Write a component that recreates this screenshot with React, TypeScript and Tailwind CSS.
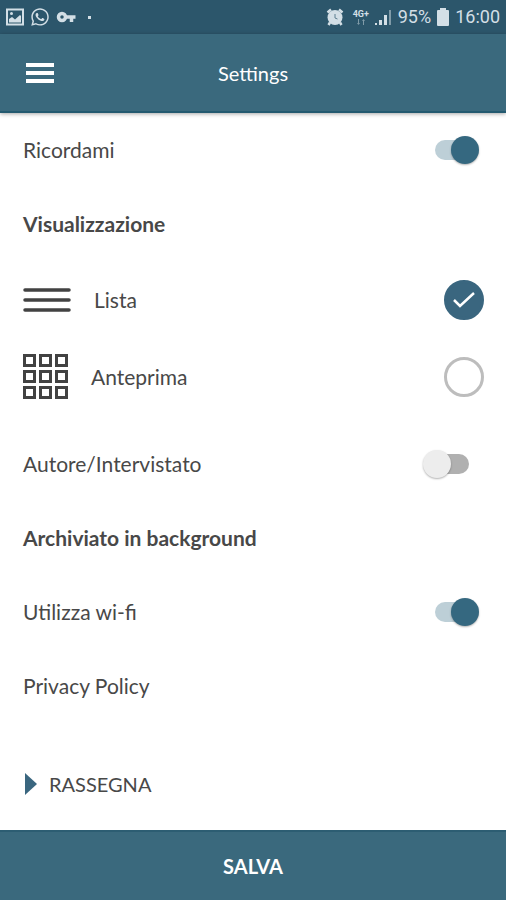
import { useState } from 'react'
import { FaWhatsapp } from 'react-icons/fa'

type View = 'lista' | 'anteprima'

function StatusBar() {
  return (
    <div className="flex h-[34px] items-center justify-between bg-[#2c566b] px-1.5 font-['Roboto',sans-serif] text-[#d3dfe6]">
      <div className="flex items-center gap-1.5">
        <svg viewBox="0 0 18 18" className="h-[18px] w-[18px]" fill="none">
          <path d="M1 1.500h16v15H1z" stroke="currentColor" strokeWidth="2" />
          <path d="M3 14.500V11l3-2 3 2.500 5-4.500 1 1v6.500z" fill="currentColor" />
          <circle cx="5.500" cy="5.500" r="1.500" fill="currentColor" />
        </svg>
        <FaWhatsapp className="h-5 w-5" />
        <svg viewBox="0 0 20 14" className="h-3.5 w-5" fill="none" stroke="currentColor">
          <circle cx="6" cy="7" r="3.500" strokeWidth="3.500" />
          <path d="M10 7h9.500" strokeWidth="3.500" />
          <path d="M15.500 7v5" strokeWidth="3.500" />
        </svg>
        <span className="ml-1.5 h-[3px] w-[3px] bg-current" />
      </div>
      <div className="flex items-center gap-1">
        <svg viewBox="0 0 18 18" className="mr-1 h-[18px] w-[18px]" fill="none" stroke="currentColor">
          <circle cx="9" cy="9.500" r="7.500" fill="currentColor" stroke="none" />
          <path d="M1.500 4.500 5 1.500M16.500 4.500 13 1.500M4 14.500 2.500 17M14 14.500l1.500 2.500" strokeWidth="2.500" />
          <path d="M9 6v4l2.500 1" stroke="#5d7f90" />
        </svg>
        <div className="flex w-[18px] flex-col items-center text-[9px] leading-[9px] font-bold">
          <span>4G+</span>
          <svg viewBox="0 0 10 6" className="h-1.5 w-2.5 opacity-50" fill="currentColor">
            <path d="M2 0h1v4h1L2.500 6 1 4h1zM7 6h1V2h1L7.500 0 6 2h1z" />
          </svg>
        </div>
        <svg viewBox="0 0 18 18" className="h-[18px] w-[18px]" fill="currentColor">
          <path d="M1 15h2v2H1zM5 12h3v5H5zM10 7h3v10h-3z" />
          <path d="M15 2h2v15h-2z" opacity=".5" />
        </svg>
        <span className="ml-0.5 text-lg leading-6">95%</span>
        <svg viewBox="0 0 12 18" className="mx-0.5 h-[18px] w-3" fill="currentColor">
          <path d="M3 0h6v2h2q1 0 1 1v14q0 1-1 1H1q-1 0-1-1V3q0-1 1-1h2z" />
        </svg>
        <span className="text-lg leading-6">16:00</span>
      </div>
    </div>
  )
}

function SwitchRow({ label, defaultChecked = false }: { label: string; defaultChecked?: boolean }) {
  return (
    <label className="flex h-[74px] items-center justify-between pr-[37px] pl-[23px]">
      {label}
      <input
        type="checkbox"
        role="switch"
        defaultChecked={defaultChecked}
        className="relative h-5 w-[34px] appearance-none rounded-full bg-[#b0b0b0] before:absolute before:-top-1 before:-left-3 before:h-7 before:w-7 before:rounded-full before:bg-[#ededed] before:shadow-[0_1px_2px_rgba(0,0,0,0.3)] checked:bg-[#bdcfd7] checked:before:left-4 checked:before:bg-[#356880]"
      />
    </label>
  )
}

function ListIcon() {
  return (
    <svg viewBox="0 0 48 26" className="h-[26px] w-12" stroke="#424242" strokeWidth="3.500" strokeLinecap="round">
      <path d="M2 3h44M2 13h44M2 23h44" />
    </svg>
  )
}

function GridIcon() {
  return (
    <svg viewBox="0 0 45 45" className="h-[45px] w-[45px]" fill="none" stroke="#424242" strokeWidth="3">
      {[1.5, 17.5, 33.5].map((y) =>
        [1.5, 17.5, 33.5].map((x) => <rect key={`${x}-${y}`} x={x} y={y} width="10" height="10" />)
      )}
    </svg>
  )
}

export default function App() {
  const [view, setView] = useState<View>('lista')

  const views = [
    { id: 'lista' as View, label: 'Lista', icon: <ListIcon /> },
    { id: 'anteprima' as View, label: 'Anteprima', icon: <GridIcon /> },
  ]

  return (
    <div className="flex min-h-screen flex-col bg-white font-['Lato',sans-serif] text-[21px] leading-7 text-[#484848]">
      <StatusBar />
      <header className="grid h-[79px] grid-cols-[1fr_auto_1fr] items-center border-b-2 border-[#245a70] bg-[#3a697d] px-[26px] text-white shadow-[0_1px_4px_rgba(0,0,0,0.35)]">
        <button type="button" aria-label="Menu" className="flex w-7 flex-col gap-1">
          <span className="h-1 bg-white" />
          <span className="h-1 bg-white" />
          <span className="h-1 bg-white" />
        </button>
        <h1 className="text-xl">Settings</h1>
      </header>

      <main className="flex-1">
        <SwitchRow label="Ricordami" defaultChecked />

        <h2 id="view-title" className="flex h-[74px] items-center px-[23px] font-bold">
          Visualizzazione
        </h2>
        <div role="radiogroup" aria-labelledby="view-title" className="mb-3">
          {views.map((v) => (
            <label key={v.id} className="flex h-[77px] items-center gap-[23px] pr-[22px] pl-[23px]">
              {v.icon}
              <span className="flex-1">{v.label}</span>
              <span className="grid h-10 w-10 place-items-center">
                <input
                  type="radio"
                  name="view"
                  value={v.id}
                  checked={view === v.id}
                  onChange={() => setView(v.id)}
                  className="col-start-1 row-start-1 h-10 w-10 appearance-none rounded-full border-[3px] border-[#bdbdbd] checked:border-[#3a667f] checked:bg-[#3a667f]"
                />
                {view === v.id && (
                  <svg
                    viewBox="0 0 24 18"
                    className="pointer-events-none col-start-1 row-start-1 h-[18px] w-6"
                    fill="none"
                    stroke="white"
                    strokeWidth="2.500"
                  >
                    <path d="M2 9l6 6L22 2" />
                  </svg>
                )}
              </span>
            </label>
          ))}
        </div>

        <SwitchRow label="Autore/Intervistato" />

        <h2 className="flex h-[74px] items-center px-[23px] font-bold">Archiviato in background</h2>
        <SwitchRow label="Utilizza wi-fi" defaultChecked />
        <a href="#privacy" className="flex h-[74px] items-center px-[23px]">
          Privacy Policy
        </a>

        <button type="button" className="mt-6 flex h-[74px] w-full items-center gap-3 px-[25px] text-xl">
          <svg viewBox="0 0 12 22" className="h-[22px] w-3" fill="#3a667f">
            <path d="M0 0l12 11L0 22z" />
          </svg>
          RASSEGNA
        </button>
      </main>

      <button type="button" className="h-[70px] border-t-2 border-[#2c5d72] bg-[#3a697d] text-xl font-bold text-white">
        SALVA
      </button>
    </div>
  )
}
